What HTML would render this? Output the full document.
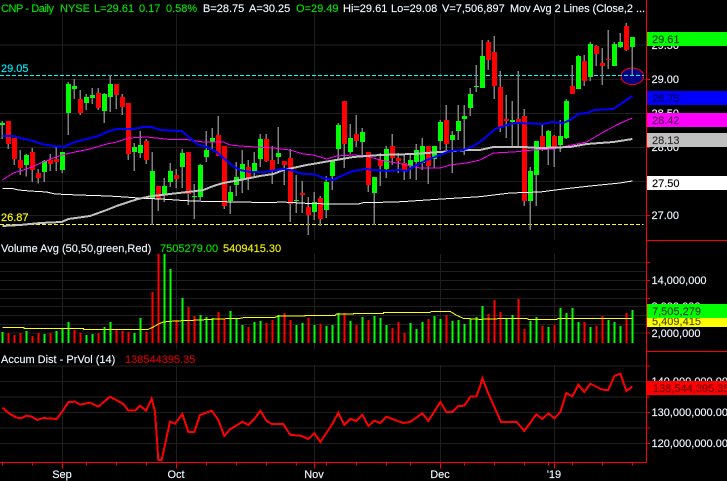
<!DOCTYPE html>
<html><head><meta charset="utf-8"><style>
html,body{margin:0;padding:0;background:#000;width:727px;height:481px;overflow:hidden}
svg{position:absolute;left:0;top:0;display:block}
text{font-family:"Liberation Sans",Arial,sans-serif;font-size:11px;fill:#eef6ff;stroke:#eef6ff;stroke-width:.15px}
</style></head><body>
<svg width="727" height="481" viewBox="0 0 2181 1443" shape-rendering="crispEdges">
<rect width="2181" height="1443" fill="#000"/>
<path fill="none" stroke="#1f1f1f" stroke-width="3" d="M0 135H1941M0 238H1941M0 340H1941M0 442H1941M0 544H1941M0 646H1941
M0 787H1941M0 814H1941M0 841H1941M0 868H1941M0 895H1941M0 920H1941M0 946H1941M0 973H1941M0 999H1941
M0 1098H1941M0 1144H1941M0 1191H1941M0 1237H1941M0 1284H1941M0 1330H1941
M187 42V720M529 42V720M943 42V720M1321 42V720M1663 42V720
M187 762V1048M529 762V1048M943 762V1048M1321 762V1048M1663 762V1048
M187 1095V1387M529 1095V1387M943 1095V1387M1321 1095V1387M1663 1095V1387"/>
<ellipse cx="1897" cy="229" rx="34" ry="25" fill="#000080" stroke="#ff0000" stroke-width="3" shape-rendering="auto"/>
<path d="M0 226H1931" stroke="#00ffff" stroke-width="3" stroke-dasharray="12 6" fill="none"/>
<path d="M0 673H1931" stroke="#ffff00" stroke-width="3" stroke-dasharray="12 6" fill="none"/>

<g fill="none">
<path stroke="#808080" stroke-width="5" d="M7 363V417M25 363V447M43 417V495M61 450V525M79 462V530M97 444V546M115 507V551M133 480V546M151 462V513M169 441V513M187 456V519M205 246V405M223 237V297M241 270V345M259 282V330M277 264V312M295 264V330M313 279V369M331 225V336M349 252V327M367 282V345M385 309V480M403 429V513M421 393V474M439 417V492M457 456V675M475 558V633M493 534V606M511 489V561M529 507V564M547 447V564M565 456V615M583 552V657M601 492V600M619 393V486M637 384V450M655 348V468M673 438V627M691 558V642M709 486V588"/>
<path stroke="#00ff00" stroke-width="15" d="M7 369V375M79 465V495M133 483V516M187 456V510M205 252V339M223 258V267M259 291V309M277 285V294M313 282V333M331 252V291M403 441V456M421 435V459M457 513V597M493 558V582M511 513V546M547 459V501M583 588V591M601 495V591M619 450V471M637 414V426M691 576V603M709 531V555"/>
<path stroke="#ff0000" stroke-width="15" d="M25 363V432M43 414V477M61 480V504M97 456V510M115 519V534M151 480V492M169 477V486M241 297V339M295 279V324M349 252V285M367 291V321M385 309V462M439 423V480M475 558V597M529 525V537M565 456V582M655 405V468M673 438V618"/>
</g>
<g fill="none" transform="translate(720,0)">
<path stroke="#808080" stroke-width="5" d="M7 450V579M25 480V570M43 456V528M61 402V501M79 402V486M97 438V552M115 381V492M133 483V555M151 447V666M169 525V639M187 543V639M205 591V705M223 576V660M241 588V678M259 528V654M277 480V570M295 369V480M313 303V504M331 372V462M349 345V441M367 384V465M385 456V576M403 531V675M421 459V558M439 438V534M457 402V495M475 459V519M493 462V540M511 462V537M529 432V540M547 414V510M565 438V552M583 438V504M601 360V450M619 315V450M637 393V519M655 315V420M673 315V465M691 264V348M709 195V276"/>
<path stroke="#00ff00" stroke-width="15" d="M7 492V537M43 489V519M61 417V477M115 459V471M169 600V603M223 606V636M259 546V630M277 480V528M295 375V447M331 414V456M367 396V426M403 531V579M439 447V507M511 480V498M529 450V486M547 438V489M583 438V477M601 366V423M637 405V420M655 363V393M673 348V357M691 282V324M709 258V261"/>
<path stroke="#ff0000" stroke-width="15" d="M25 501V534M79 417V483M97 480V510M133 483V495M151 474V612M187 579V585M205 621V645M241 594V657M313 303V432M349 402V423M385 456V555M421 480V498M457 438V474M475 474V483M493 489V510M565 438V498M619 360V432"/>
</g>
<g fill="none" transform="translate(1440,0)">
<path stroke="#808080" stroke-width="5" d="M7 120V264M25 120V210M43 108V297M61 213V396M79 285V414M97 303V441M115 213V441M133 327V618M151 501V690M169 423V618M187 375V453M205 390V495M223 405V501M241 360V456M259 297V417M277 195V282M295 165V258M313 165V258M331 126V243M349 135V198M367 144V255M385 90V207M403 126V198M421 99V144M439 69V153M457 141V225"/>
<path stroke="#00ff00" stroke-width="15" d="M7 168V264M97 360V366M151 513V603M169 423V525M205 393V441M241 408V435M259 303V414M295 168V267M331 132V231M403 132V198M421 126V141M457 111V141"/>
<path stroke="#ff0000" stroke-width="15" d="M25 126V180M43 156V258M61 261V381M79 357V363M115 357V366M133 348V603M187 408V441M223 408V441M277 258V282M313 183V243M349 138V162M367 189V198M385 177V180M439 78V150"/>
</g>

<!-- white MA -->
<polyline fill="none" stroke="#ffffff" stroke-width="3" points="7,565 35,565 55,570 90,573 140,576 165,582 235,585 325,588 375,591 415,594 500,598 555,602 610,604 720,606 810,608 845,606 920,610 990,612 1075,612 1090,608 1185,606 1220,604 1310,598 1440,590 1530,579 1620,576 1690,567 1770,558 1860,549 1897,543"/>
<!-- magenta MA -->
<polyline fill="none" stroke="#ff00ff" stroke-width="3" points="7,540 40,519 80,507 130,486 160,474 185,465 225,456 270,447 320,432 350,426 385,414 440,411 505,418 555,418 610,426 670,426 690,435 720,438 770,441 820,444 870,450 910,462 940,465 980,477 1010,468 1060,465 1100,468 1140,480 1190,489 1220,495 1260,504 1320,504 1350,495 1400,489 1440,480 1480,459 1540,456 1600,450 1660,447 1700,438 1760,426 1810,396 1860,370 1897,354"/>
<!-- gray MA -->
<polyline fill="none" stroke="#c0c0c0" stroke-width="6" points="7,678 60,675 120,669 185,666 205,657 270,648 320,630 350,618 385,606 415,597 450,589 510,582 580,574 610,570 640,558 670,549 720,540 780,528 820,522 850,510 920,495 990,483 1060,471 1140,465 1240,462 1320,456 1400,450 1440,450 1480,441 1570,441 1620,444 1710,441 1760,432 1840,426 1897,417"/>
<!-- blue MA -->
<polyline fill="none" stroke="#0000ff" stroke-width="6" points="7,408 40,408 60,414 100,423 125,432 160,438 190,441 225,426 260,417 295,408 320,396 350,387 400,387 430,381 455,381 480,390 545,393 570,414 590,432 620,441 650,456 670,474 695,495 720,510 750,516 795,516 830,510 850,507 870,510 910,522 940,522 970,534 1000,540 1030,525 1060,513 1100,507 1120,510 1160,513 1200,510 1220,513 1250,495 1280,480 1320,465 1350,453 1390,450 1420,438 1440,426 1465,405 1485,387 1530,372 1550,369 1630,372 1655,366 1690,369 1710,360 1735,342 1760,339 1785,330 1840,327 1870,306 1897,288"/>

<!-- volume -->
<g transform="translate(0,720)" fill="none" stroke-width="6">
<path stroke="#00ff00" d="M7 276V309M79 273V309M133 282V309M169 273V309M187 264V309M205 246V309M259 285V309M277 282V309M313 261V309M331 246V309M403 279V309M421 234V309M493 42V309M511 87V309M547 174V309M601 225V309M619 231V309M637 234V309M691 213V309M709 234V309"/>
<path stroke="#ff0000" d="M25 279V309M43 285V309M61 279V309M97 288V309M115 279V309M151 279V309M223 270V309M241 279V309M295 279V309M349 270V309M367 273V309M385 276V309M439 276V309M457 156V309M475 42V309M529 240V309M565 201V309M583 228V309M655 216V309M673 237V309"/>
</g>
<g transform="translate(720,720)" fill="none" stroke-width="6">
<path stroke="#00ff00" d="M7 255V309M43 246V309M61 243V309M115 225V309M169 255V309M187 249V309M223 255V309M259 258V309M277 255V309M295 219V309M331 243V309M367 231V309M403 228V309M421 234V309M439 255V309M511 249V309M529 267V309M547 246V309M583 228V309M601 237V309M637 243V309M655 240V309M673 252V309M691 237V309M709 231V309"/>
<path stroke="#ff0000" d="M25 261V309M79 249V309M97 240V309M133 219V309M151 240V309M205 234V309M241 252V309M313 219V309M349 255V309M385 240V309M457 264V309M475 246V309M493 279V309M565 237V309M619 225V309"/>
</g>
<g transform="translate(1440,720)" fill="none" stroke-width="6">
<path stroke="#00ff00" d="M7 198V309M79 234V309M97 225V309M151 243V309M169 231V309M205 261V309M241 204V309M259 219V309M277 204V309M295 246V309M331 261V309M385 240V309M403 246V309M421 258V309M457 210V309"/>
<path stroke="#ff0000" d="M25 222V309M43 180V309M61 216V309M115 177V309M133 267V309M187 258V309M223 255V309M313 246V309M349 258V309M367 228V309M439 219V309"/>
</g>
<polyline fill="none" stroke="#ffff00" stroke-width="3" points="7,982 72,982 72,985 250,985 250,988 445,988 460,981 475,972 490,966 525,963 600,960 650,957 720,955 735,952 825,952 835,948 915,948 915,946 1005,946 1010,942 1060,942 1060,940 1150,940 1150,937 1290,937 1295,934 1350,934 1370,946 1390,955 1440,958 1530,955 1580,955 1585,958 1670,958 1675,955 1897,955"/>
<!-- accum dist -->
<polyline fill="none" stroke="#ff0000" stroke-width="6" points="7,1223 30,1242 50,1253 65,1254 80,1247 95,1250 112,1260 130,1254 170,1257 190,1230 205,1206 225,1205 240,1214 270,1208 295,1220 330,1190 370,1212 385,1232 405,1232 420,1217 438,1232 455,1196 465,1235 475,1380 485,1380 510,1265 525,1271 547,1242 565,1296 583,1296 600,1245 635,1232 655,1260 673,1308 690,1288 720,1270 727,1265 745,1275 763,1257 781,1232 800,1263 815,1272 850,1272 870,1304 905,1308 925,1317 943,1300 961,1326 997,1272 1015,1238 1033,1275 1051,1257 1069,1263 1087,1244 1105,1278 1123,1262 1141,1269 1159,1250 1177,1257 1210,1269 1230,1266 1267,1240 1285,1263 1321,1206 1339,1236 1357,1236 1375,1218 1393,1217 1411,1190 1429,1190 1440,1160 1447,1135 1465,1180 1503,1266 1550,1266 1573,1293 1609,1243 1627,1257 1645,1240 1663,1255 1681,1236 1699,1179 1717,1189 1735,1154 1753,1176 1771,1151 1789,1160 1807,1169 1825,1170 1843,1128 1861,1121 1879,1173 1897,1160"/>

<!-- frame -->
<g fill="none" stroke="#ff0000" stroke-width="3">
<path d="M1939 0V1387M0 1387H1939M1939 721H2181M1939 1055H2181"/>
<path d="M7 1387V1397M97 1387V1397M259 1387V1397M349 1387V1397M439 1387V1397M619 1387V1397M709 1387V1397M799 1387V1397M889 1387V1397M979 1387V1397M1069 1387V1397M1159 1387V1397M1231 1387V1397M1393 1387V1397M1483 1387V1397M1573 1387V1397M1645 1387V1397M1717 1387V1397M1807 1387V1397M1897 1387V1397"/>
<path d="M187 1387V1405M529 1387V1405M943 1387V1405M1321 1387V1405M1663 1387V1405"/>
<path d="M1939 135H1950M1939 238H1950M1939 340H1950M1939 442H1950M1939 544H1950M1939 646H1950
M1939 787H1950M1939 841H1950M1939 895H1950M1939 946H1950M1939 999H1950
M1939 1098H1950M1939 1144H1950M1939 1191H1950M1939 1237H1950M1939 1284H1950M1939 1330H1950"/>
</g>
</svg>

<svg width="727" height="481" viewBox="0 0 727 481">
<text x="1" y="12" textLength="53" lengthAdjust="spacing" style="fill:#00e000;stroke:#00e000">CNP - Daily</text>
<text x="60" y="12" style="fill:#00e000;stroke:#00e000">NYSE</text>
<text x="94" y="12" style="fill:#00e000;stroke:#00e000">L=29.61</text>
<text x="139" y="12" style="fill:#00e000;stroke:#00e000">0.17</text>
<text x="166" y="12" style="fill:#00e000;stroke:#00e000">0.58%</text>
<text x="203" y="12">B=28.75</text>
<text x="249" y="12">A=30.25</text>
<text x="296" y="12" style="fill:#00e000;stroke:#00e000">O=29.49</text>
<text x="343" y="12">Hi=29.61</text>
<text x="391" y="12">Lo=29.08</text>
<text x="442" y="12">V=7,506,897</text>
<text x="510" y="12" textLength="135" lengthAdjust="spacing">Mov Avg 2 Lines (Close,2 ...</text>
<text x="1" y="72" style="fill:#00e8ff;stroke:#00e8ff">29.05</text>
<text x="1" y="221" style="fill:#ffff00;stroke:#ffff00">26.87</text>

<text x="1" y="252">Volume Avg (50,50,green,Red)</text>
<text x="160" y="252" style="fill:#00e000;stroke:#00e000">7505279.00</text>
<text x="223" y="252" style="fill:#f0f000;stroke:#f0f000">5409415.30</text>
<text x="1" y="363">Accum Dist - PrVol (14)</text>
<text x="125" y="363" style="fill:#d00000;stroke:#d00000">138544395.35</text>

<text x="62" y="478" text-anchor="middle">Sep</text>
<text x="176" y="478" text-anchor="middle">Oct</text>
<text x="314" y="478" text-anchor="middle">Nov</text>
<text x="440" y="478" text-anchor="middle">Dec</text>
<text x="554" y="478" text-anchor="middle">'19</text>

<text x="651.5" y="49">29.50</text>
<rect x="647" y="32" width="80" height="14" fill="#00ff00"/>
<text x="652" y="43" style="fill:#004000;stroke:#004000">29.61</text>
<text x="651.5" y="83">29.00</text>
<rect x="647" y="91" width="80" height="14" fill="#0000ff"/>
<text x="652" y="102" style="fill:#000050;stroke:#000050">28.75</text>
<text x="651.5" y="117">28.50</text>
<rect x="647" y="113" width="80" height="14" fill="#ff00ff"/>
<text x="652" y="124" style="fill:#500050;stroke:#500050">28.42</text>
<text x="651.5" y="151">28.00</text>
<rect x="647" y="133" width="80" height="14" fill="#c0c0c0"/>
<text x="652" y="144" style="fill:#303030;stroke:#303030">28.13</text>
<rect x="647" y="176" width="80" height="14" fill="#ffffff"/>
<text x="652" y="187" style="fill:#000;stroke:#000">27.50</text>
<text x="651.5" y="219">27.00</text>

<text x="651.5" y="284">14,000,000</text>
<text x="651.5" y="310">8,000,000</text>
<rect x="647" y="313" width="80" height="14" fill="#ffff00"/>
<text x="652" y="325" style="fill:#505000;stroke:#505000">5,409,415</text>
<rect x="647" y="304" width="80" height="14" fill="#00ff00"/>
<text x="652" y="315" style="fill:#004000;stroke:#004000">7,505,279</text>
<text x="651.5" y="337">2,000,000</text>

<text x="651.5" y="385">140,000,000.00</text>
<rect x="647" y="381" width="80" height="14" fill="#ff0000"/>
<text x="653" y="392" style="fill:#700000;stroke:#700000">138,544,395.35</text>
<text x="651.5" y="416">130,000,000.00</text>
<text x="651.5" y="447">120,000,000.00</text>
</svg>
</body></html>
